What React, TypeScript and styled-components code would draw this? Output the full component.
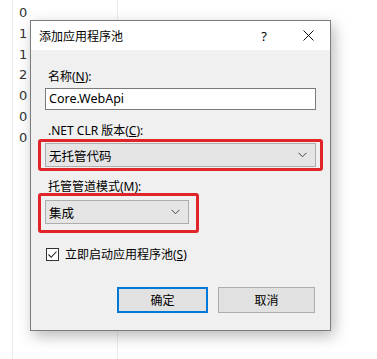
import React from 'react';
import styled, { createGlobalStyle } from 'styled-components';

const GlobalStyle = createGlobalStyle`
    html, body {
        margin: 0;
        padding: 0;
        background: #ffffff;
    }
    body {
        font-family: "Noto Sans", "Noto Sans CJK SC", sans-serif;
        font-size: 12px;
        color: #000;
    }
`;

const Page = styled.div`
    position: relative;
    width: 377px;
    height: 359px;
    display: flex;
    overflow: hidden;
    background: #fff;
`;

const Margin = styled.div`
    width: 12px;
    border-right: 1px solid #ececec;
`;

const Lines = styled.div`
    width: 105px;
    padding: 3px 0 0 6px;
    border-right: 1px solid #ececec;
    box-sizing: border-box;
    font-family: "DejaVu Sans", sans-serif;
    font-size: 13px;
    line-height: 20.8px;
    color: #333;
`;

const Dialog = styled.div`
    position: absolute;
    left: 30px;
    top: 20px;
    width: 301px;
    height: 311px;
    box-sizing: border-box;
    border: 1px solid #7c7c7c;
    background: #f0f0f0;
    box-shadow: 3px 5px 14px rgba(0, 0, 0, 0.28);
    display: flex;
    flex-direction: column;
`;

const TitleBar = styled.div`
    height: 29px;
    background: #fff;
    display: flex;
    align-items: center;
    padding-left: 8px;
    font-size: 12px;
`;

const Title = styled.div`
    flex: 1;
    padding-top: 1px;
`;

const TitleButton = styled.div`
    width: 44px;
    height: 29px;
    display: flex;
    align-items: center;
    justify-content: center;
    font-size: 13px;
`;

const Body = styled.div`
    flex: 1;
    display: flex;
    flex-direction: column;
    padding: 19px 15px 0 14px;
`;

const Label = styled.div<{ $top: number }>`
    margin-top: ${p => p.$top}px;
    line-height: 16px;
    height: 16px;
    padding-left: 3px;
    white-space: nowrap;
`;

const U = styled.span`
    text-decoration: underline;
`;

const TextBox = styled.div`
    margin-top: 3px;
    height: 22px;
    width: 271px;
    box-sizing: border-box;
    border: 1px solid #7a7a7a;
    background: #fff;
    padding-left: 3px;
    line-height: 20px;
    font-size: 12.5px;
`;

const Marked = styled.div<{ $top: number; $w: number; $inset: string }>`
    position: relative;
    margin-top: ${p => p.$top}px;
    width: ${p => p.$w}px;

    &::after {
        content: '';
        position: absolute;
        inset: ${p => p.$inset};
        border: 3px solid #e0252a;
        border-radius: 3px;
        pointer-events: none;
    }
`;

const Select = styled.div`
    height: 24px;
    box-sizing: border-box;
    border: 1px solid #adadad;
    background: #e5e5e5;
    display: flex;
    align-items: center;
    padding: 0 8px 0 3px;
    font-size: 12.5px;
`;

const SelectText = styled.span`
    flex: 1;
`;

const CheckRow = styled.label`
    margin-top: 22px;
    height: 16px;
    display: flex;
    align-items: center;
    gap: 6px;
    padding-left: 1px;
`;

const Box = styled.span`
    width: 13px;
    height: 13px;
    box-sizing: border-box;
    border: 1px solid #333;
    background: #fff;
    display: flex;
    align-items: center;
    justify-content: center;
`;

const Buttons = styled.div`
    margin-top: 25px;
    display: flex;
    justify-content: flex-end;
    gap: 10px;
`;

const Button = styled.div<{ $primary?: boolean; $w: number }>`
    width: ${p => p.$w}px;
    height: 26px;
    box-sizing: border-box;
    border: ${p => (p.$primary ? '2px solid #0078d7' : '1px solid #adadad')};
    background: #e1e1e1;
    display: flex;
    align-items: center;
    justify-content: center;
    font-size: 12px;
`;

const Chevron = () => (
    <svg width="9" height="6" viewBox="0 0 9 6">
        <path d="M0.5 0.8 L4.5 4.8 L8.5 0.8" fill="none" stroke="#444" strokeWidth="1" />
    </svg>
);

const Close = () => (
    <svg width="11" height="11" viewBox="0 0 11 11">
        <path d="M0.5 0.5 L10.5 10.5 M10.5 0.5 L0.5 10.5" stroke="#111" strokeWidth="1" />
    </svg>
);

const Tick = () => (
    <svg width="11" height="11" viewBox="0 0 11 11">
        <path d="M1.5 5.5 L4.2 8.3 L9.5 2.5" fill="none" stroke="#222" strokeWidth="1.1" />
    </svg>
);

const App: React.FC = () => {
    const digits = ['0', '1', '1', '2', '0', '0', '0'];

    return (
        <Page>
            <GlobalStyle />
            <Margin />
            <Lines>
                {digits.map((d, i) => (
                    <div key={i}>{d}</div>
                ))}
            </Lines>
            <Dialog>
                <TitleBar>
                    <Title>添加应用程序池</Title>
                    <TitleButton>?</TitleButton>
                    <TitleButton>
                        <Close />
                    </TitleButton>
                </TitleBar>
                <Body>
                    <Label $top={0}>
                        名称(<U>N</U>):
                    </Label>
                    <TextBox>Core.WebApi</TextBox>
                    <Label $top={13}>
                        .NET CLR 版本(<U>C</U>):
                    </Label>
                    <Marked $top={4} $w={271} $inset="-4px -7px -4px -7px">
                        <Select>
                            <SelectText>无托管代码</SelectText>
                            <Chevron />
                        </Select>
                    </Marked>
                    <Label $top={12}>托管管道模式(M):</Label>
                    <Marked $top={5} $w={144} $inset="-7px -10px -9px -7px">
                        <Select>
                            <SelectText>集成</SelectText>
                            <Chevron />
                        </Select>
                    </Marked>
                    <CheckRow>
                        <Box>
                            <Tick />
                        </Box>
                        <span>
                            立即启动应用程序池(<U>S</U>)
                        </span>
                    </CheckRow>
                    <Buttons>
                        <Button $primary $w={91}>确定</Button>
                        <Button $w={97}>取消</Button>
                    </Buttons>
                </Body>
            </Dialog>
        </Page>
    );
};

export default App;
